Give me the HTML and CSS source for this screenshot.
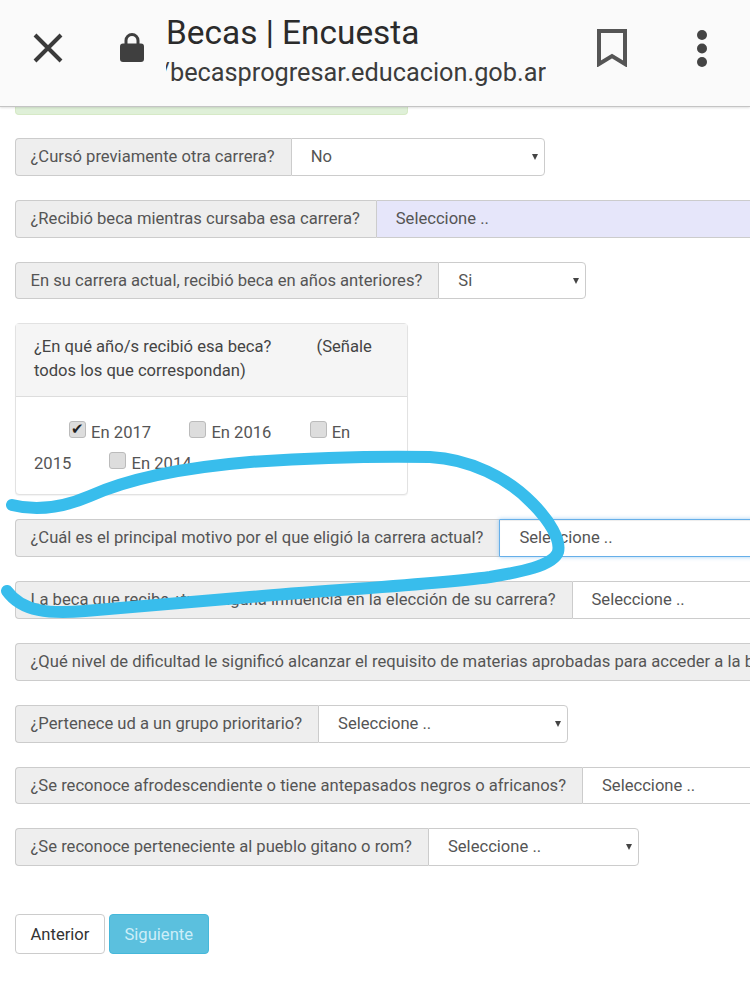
FILE: index.html
```html
<!DOCTYPE html>
<html lang="es">
<head>
<meta charset="utf-8">
<title>Becas | Encuesta</title>
<link rel="stylesheet" href="styles.css">
</head>
<body>
<div class="page">
  <header class="bar">
    <svg class="ic-close" viewBox="0 0 30 30"><path d="M2 2 28 28M28 2 2 28"/></svg>
    <svg class="ic-lock" viewBox="0 0 24 30"><path class="shackle" d="M6 13V8.500a6 6 0 0 1 12 0V13"/><rect y="11.500" width="24" height="18.500" rx="3"/></svg>
    <div class="titles">
      <div class="title">Becas | Encuesta</div>
      <div class="url"><span>/becasprogresar.educacion.gob.ar</span></div>
    </div>
    <svg class="ic-mark" viewBox="0 0 30 38"><path d="M2 2H28V35L15 27 2 35Z"/></svg>
    <svg class="ic-dots" viewBox="0 0 10 37"><circle cx="5" cy="5" r="5"/><circle cx="5" cy="18.500" r="5"/><circle cx="5" cy="32" r="5"/></svg>
  </header>
  <div class="alert"></div>

  <main class="form">
    <div class="row"><label class="lab">¿Cursó previamente otra carrera?</label><div class="sel s254"><span>No</span><i class="caret"></i></div></div>
    <div class="row"><label class="lab">¿Recibió beca mientras cursaba esa carrera?</label><div class="sel wide lilac"><span>Seleccione ..</span></div></div>
    <div class="row"><label class="lab">En su carrera actual, recibió beca en años anteriores?</label><div class="sel s148"><span>Si</span><i class="caret"></i></div></div>

    <section class="panel">
      <div class="panel-head">¿En qué año/s recibió esa beca? <span class="note">(Señale todos los que correspondan)</span></div>
      <div class="panel-body">
        <label class="opt"><input type="checkbox" checked> En 2017</label>
        <label class="opt"><input type="checkbox"> En 2016</label>
        <label class="opt"><input type="checkbox"> En 2015</label>
        <label class="opt"><input type="checkbox"> En 2014</label>
      </div>
    </section>

    <div class="row"><label class="lab">¿Cuál es el principal motivo por el que eligió la carrera actual?</label><div class="sel wide focus"><span>Seleccione ..</span></div></div>
    <div class="row"><label class="lab">La beca que recibe ¿tuvo alguna influencia en la elección de su carrera?</label><div class="sel wide"><span>Seleccione ..</span></div></div>
    <div class="row"><label class="lab">¿Qué nivel de dificultad le significó alcanzar el requisito de materias aprobadas para acceder a la beca?</label></div>
    <div class="row"><label class="lab">¿Pertenece ud a un grupo prioritario?</label><div class="sel s250"><span>Seleccione ..</span><i class="caret"></i></div></div>
    <div class="row"><label class="lab">¿Se reconoce afrodescendiente o tiene antepasados negros o africanos?</label><div class="sel wide"><span>Seleccione ..</span></div></div>
    <div class="row"><label class="lab">¿Se reconoce perteneciente al pueblo gitano o rom?</label><div class="sel s211"><span>Seleccione ..</span><i class="caret"></i></div></div>

    <div class="actions">
      <button class="btn">Anterior</button>
      <button class="btn info">Siguiente</button>
    </div>
  </main>

  <svg class="scribble" viewBox="0 0 750 983"><path d="M12 505C35 511 62 508 90 496C130 478 190 467 250 462C310 458 380 456 430 457C470 459 508 478 532 503C550 521 561 540 558 552C553 566 520 572 490 577C430 585 330 590 250 597C190 602 130 607 85 611C50 614 22 612 7 591"/></svg>
</div>
</body>
</html>
```

FILE: styles.css
```css
* { box-sizing: border-box; }
html, body { margin: 0; padding: 0; background: #fff; }
body { font-family: Roboto, "Liberation Sans", sans-serif; color: #555; }
.page { position: relative; width: 750px; height: 983px; overflow: hidden; }

.bar {
  position: relative; z-index: 2;
  height: 107px; padding-left: 33px;
  display: flex; align-items: flex-start;
  background: #fafafa;
  border-bottom: 1px solid #c4c4c4;
  box-shadow: 0 1px 2px rgba(0,0,0,.12);
}
.ic-close { width: 30px; height: 30px; margin: 33px 0 0; flex: none; fill: none; stroke: #3a3a3a; stroke-width: 4; }
.ic-lock { width: 24px; height: 30px; margin: 32px 0 0 57px; flex: none; fill: #3f3f3f; }
.ic-lock .shackle { fill: none; stroke: #3f3f3f; stroke-width: 3; }
.titles { width: 380px; margin-left: 22px; flex: none; }
.title { margin-top: 13px; font-size: 33.400px; line-height: 40px; color: #2b2b2b; white-space: nowrap; }
.url { display: flex; justify-content: flex-end; overflow: hidden; margin-top: 5px; font-size: 25.300px; line-height: 30px; color: #3c3c3c; white-space: nowrap; }
.url span { flex: none; }
.ic-mark { width: 30px; height: 38px; margin: 29px 0 0 51px; flex: none; fill: none; stroke: #555; stroke-width: 4; }
.ic-dots { width: 10px; height: 37px; margin: 30px 0 0 70px; flex: none; fill: #444; }

.alert { width: 393px; height: 8px; margin-left: 15px; background: #dff0d8; border-radius: 0 0 4px 4px; border: 1px solid #d6e9c6; border-top: 0; }

.form { padding: 23px 0 0 15px; display: flex; flex-direction: column; gap: 24px; }
.row { display: flex; height: 37.800px; font-size: 16.600px; line-height: 35px; white-space: nowrap; }
.lab { flex: none; padding: 0 16px 0 14.500px; background: #eee; border: 1px solid #ccc; border-right: 0; border-radius: 4px 0 0 4px; color: #555; }
.sel { flex: none; position: relative; padding-left: 19px; background: #fff; border: 1px solid #ccc; border-radius: 0 4px 4px 0; }
.s254 { width: 254px; }
.s148 { width: 148px; }
.s250 { width: 250px; }
.s211 { width: 211px; }
.wide { width: 400px; }
.lilac { background: #e6e6fa; }
.focus { border-color: #66afe9; box-shadow: inset 0 1px 1px rgba(0,0,0,.075), 0 0 4px rgba(102,175,233,.6); }
.caret { position: absolute; right: 6px; top: 15px; border-style: solid; border-width: 6px 3.500px 0; border-color: #444 transparent transparent; }

.panel { width: 393px; height: 172px; background: #fff; border: 1px solid #e2e2e2; border-radius: 4px; box-shadow: 0 1px 1px rgba(0,0,0,.05); font-size: 16.600px; line-height: 24px; }
.panel-head { height: 73px; padding: 11px 18px 0; background: #f5f5f5; border-bottom: 1px solid #ddd; color: #444; }
.note { margin-left: 41px; }
.panel-body { padding: 20px 18px 0; text-indent: 35px; line-height: 31px; color: #555; }
.opt { margin-right: 34px; }
.opt input {
  appearance: none; -webkit-appearance: none;
  width: 17px; height: 17px; margin: 0 1px 0 0; position: relative; top: 0;
  background: #ddd; border: 1px solid #bbb; border-radius: 3px;
  text-indent: 0;
}
.opt input:checked::after { content: "✔"; position: absolute; left: 0; top: 0; width: 15px; height: 14px; font-size: 15px; line-height: 14px; text-align: center; color: #222; }

.actions { display: flex; gap: 4px; margin-top: 24px; }
.btn { height: 40px; padding: 0 14.500px; font: 16.600px Roboto, "Liberation Sans", sans-serif; color: #333; background: #fff; border: 1px solid #ccc; border-radius: 4px; }
.info { color: #cdeef8; background: #5bc0de; border-color: #46b8da; }

.scribble { position: absolute; left: 0; top: 0; width: 750px; height: 983px; z-index: 1; fill: none; stroke: #38bdec; stroke-width: 12; stroke-linecap: round; stroke-linejoin: round; }
```
